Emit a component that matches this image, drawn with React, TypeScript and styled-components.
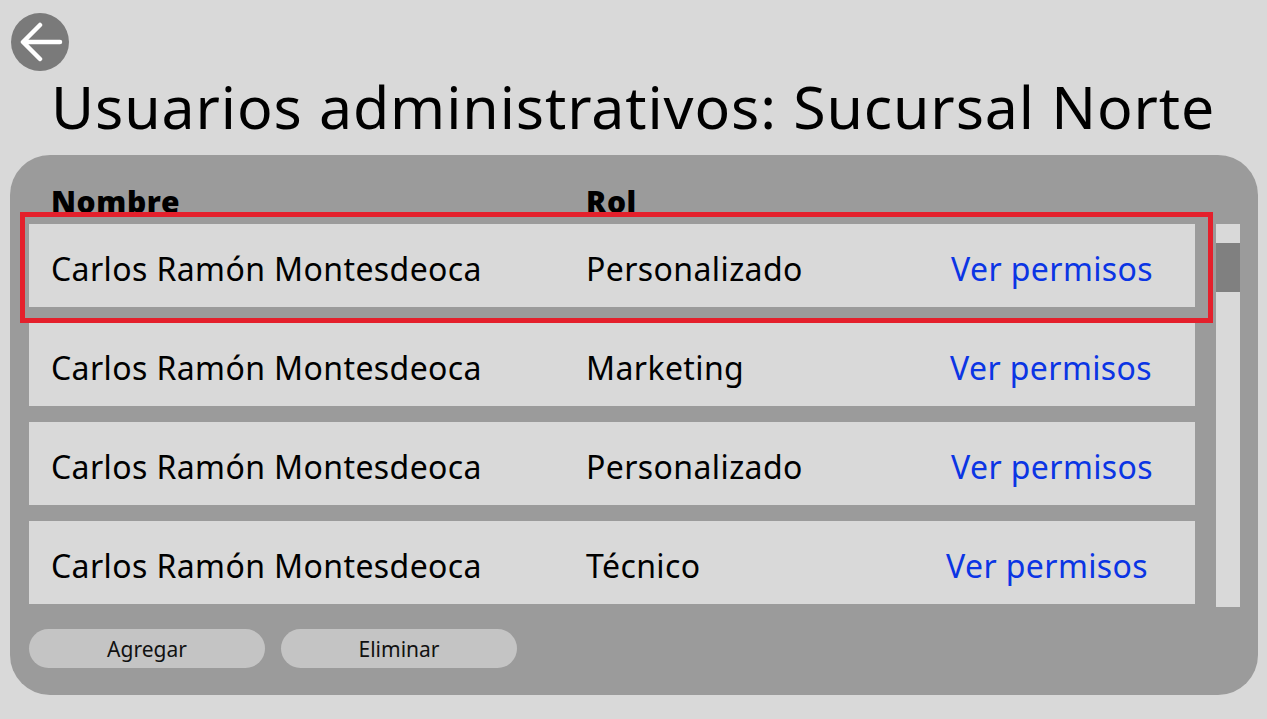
import styled, { createGlobalStyle } from "styled-components";

const GlobalStyle = createGlobalStyle`
    html, body {
        margin: 0;
        padding: 0;
        background: #d9d9d9;
        font-family: "Noto Sans", "Open Sans", sans-serif;
    }
`;

const Page = styled.div`
    width: 1267px;
    height: 719px;
    overflow: hidden;
    display: flex;
    flex-direction: column;
    padding: 13px 9px 0 10px;
    box-sizing: border-box;
`;
const BackButton = styled.button`
    width: 58px;
    height: 58px;
    margin-left: 1px;
    border-radius: 50%;
    border: none;
    padding: 0;
    background: #7a7a7a;
    display: flex;
    align-items: center;
    justify-content: center;
    cursor: pointer;
`;
const Title = styled.h1`
    margin: 0 0 0 41px;
    font-size: 59px;
    font-weight: 400;
    line-height: 70px;
    color: #000;
    letter-spacing: 0.9px;
    white-space: nowrap;
`;
const Panel = styled.section`
    position: relative;
    margin-top: 14px;
    height: 540px;
    border-radius: 40px;
    background: #9b9b9b;
    padding: 24px 18px 0 19px;
    box-sizing: border-box;
    display: flex;
    flex-direction: column;
`;
const HeaderRow = styled.div`
    display: grid;
    grid-template-columns: 535px 1fr;
    padding-left: 22px;
    height: 45px;
    align-items: center;
    font-size: 30px;
    font-weight: 900;
    letter-spacing: 0.6px;
    color: #000;
`;
const Body = styled.div`
    display: flex;
    gap: 21px;
`;
const List = styled.ul`
    list-style: none;
    margin: 0;
    padding: 0;
    width: 1166px;
    height: 383px;
    overflow: hidden;
    display: flex;
    flex-direction: column;
    gap: 16px;
`;
const Row = styled.li`
    flex: none;
    height: 83px;
    background: #d9d9d9;
    display: grid;
    grid-template-columns: 535px 365px 1fr;
    align-items: center;
    padding: 6px 0 0 22px;
    box-sizing: border-box;
    font-size: 32px;
    letter-spacing: 0.4px;
    color: #000;
`;
const Cell = styled.span`
    white-space: nowrap;
`;
const PermLink = styled.a<{ $shift: number }>`
    color: #0b35e4;
    text-decoration: none;
    white-space: nowrap;
    margin-left: ${(p) => p.$shift}px;
    cursor: pointer;
`;
const Track = styled.div`
    width: 24px;
    height: 383px;
    background: #d9d9d9;
    position: relative;
`;
const Thumb = styled.div`
    position: absolute;
    left: 0;
    top: 19px;
    width: 24px;
    height: 49px;
    background: #808080;
`;
const Selection = styled.div`
    position: absolute;
    left: 10px;
    top: 57px;
    width: 1193px;
    height: 111px;
    border: 5px solid #e4202c;
    box-sizing: border-box;
    pointer-events: none;
`;
const Actions = styled.div`
    display: flex;
    gap: 16px;
    margin-top: 22px;
`;
const ActionBtn = styled.button`
    width: 236px;
    height: 39px;
    border: none;
    border-radius: 20px;
    background: #c4c4c4;
    font-family: "Noto Sans", sans-serif;
    font-size: 21px;
    color: #111;
    cursor: pointer;
`;

const users = [
    { name: "Carlos Ramón Montesdeoca", role: "Personalizado", shift: 0 },
    { name: "Carlos Ramón Montesdeoca", role: "Marketing", shift: -1 },
    { name: "Carlos Ramón Montesdeoca", role: "Personalizado", shift: 0 },
    { name: "Carlos Ramón Montesdeoca", role: "Técnico", shift: -5 },
];

function App() {
    return (
        <>
            <GlobalStyle />
            <Page>
                <BackButton aria-label="Volver">
                    <svg width="48" height="40" viewBox="0 0 48 40">
                        <path
                            d="M44 20 H8 M24 3 L7 20 L24 37"
                            stroke="#fff"
                            strokeWidth="4.5"
                            strokeLinecap="round"
                            strokeLinejoin="round"
                            fill="none"
                        />
                    </svg>
                </BackButton>
                <Title>Usuarios administrativos: Sucursal Norte</Title>
                <Panel>
                    <HeaderRow>
                        <span>Nombre</span>
                        <span>Rol</span>
                    </HeaderRow>
                    <Body>
                        <List>
                            {users.map((u, i) => (
                                <Row key={i}>
                                    <Cell>{u.name}</Cell>
                                    <Cell>{u.role}</Cell>
                                    <PermLink $shift={u.shift}>Ver permisos</PermLink>
                                </Row>
                            ))}
                        </List>
                        <Track>
                            <Thumb />
                        </Track>
                    </Body>
                    <Actions>
                        <ActionBtn>Agregar</ActionBtn>
                        <ActionBtn>Eliminar</ActionBtn>
                    </Actions>
                    <Selection />
                </Panel>
            </Page>
        </>
    );
}
export default App;
